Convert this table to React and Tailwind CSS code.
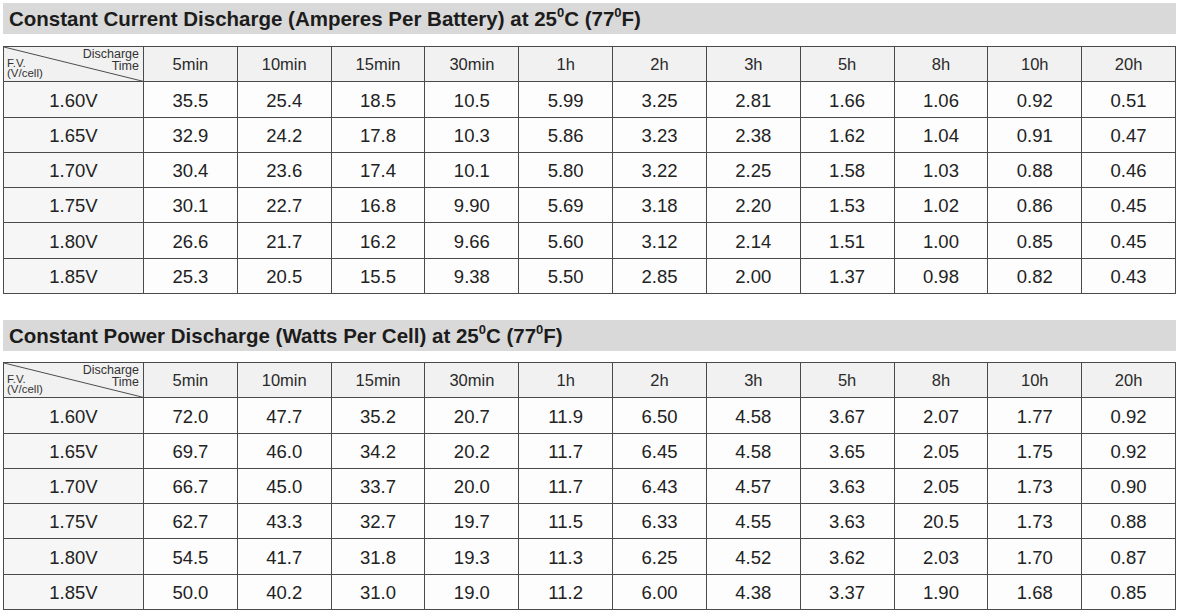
const times = ["5min", "10min", "15min", "30min", "1h", "2h", "3h", "5h", "8h", "10h", "20h"];

const currentRows = [
  ["1.60V", "35.5", "25.4", "18.5", "10.5", "5.99", "3.25", "2.81", "1.66", "1.06", "0.92", "0.51"],
  ["1.65V", "32.9", "24.2", "17.8", "10.3", "5.86", "3.23", "2.38", "1.62", "1.04", "0.91", "0.47"],
  ["1.70V", "30.4", "23.6", "17.4", "10.1", "5.80", "3.22", "2.25", "1.58", "1.03", "0.88", "0.46"],
  ["1.75V", "30.1", "22.7", "16.8", "9.90", "5.69", "3.18", "2.20", "1.53", "1.02", "0.86", "0.45"],
  ["1.80V", "26.6", "21.7", "16.2", "9.66", "5.60", "3.12", "2.14", "1.51", "1.00", "0.85", "0.45"],
  ["1.85V", "25.3", "20.5", "15.5", "9.38", "5.50", "2.85", "2.00", "1.37", "0.98", "0.82", "0.43"],
];

const powerRows = [
  ["1.60V", "72.0", "47.7", "35.2", "20.7", "11.9", "6.50", "4.58", "3.67", "2.07", "1.77", "0.92"],
  ["1.65V", "69.7", "46.0", "34.2", "20.2", "11.7", "6.45", "4.58", "3.65", "2.05", "1.75", "0.92"],
  ["1.70V", "66.7", "45.0", "33.7", "20.0", "11.7", "6.43", "4.57", "3.63", "2.05", "1.73", "0.90"],
  ["1.75V", "62.7", "43.3", "32.7", "19.7", "11.5", "6.33", "4.55", "3.63", "20.5", "1.73", "0.88"],
  ["1.80V", "54.5", "41.7", "31.8", "19.3", "11.3", "6.25", "4.52", "3.62", "2.03", "1.70", "0.87"],
  ["1.85V", "50.0", "40.2", "31.0", "19.0", "11.2", "6.00", "4.38", "3.37", "1.90", "1.68", "0.85"],
];

const Title = ({ children }) => (
  <div className="h-[31px] bg-[#d9d9d9] flex items-center pl-[6px] pt-[1px] text-[20.5px] font-bold text-[#1c1c1c]">
    {children}
  </div>
);

const Deg = () => <span className="text-[13px] relative -top-[6px]">0</span>;

const Table = ({ rows }) => (
  <div className="mt-[12px] h-[248px] grid grid-cols-[140px_repeat(11,1fr)] grid-rows-[repeat(7,1fr)] border-t border-l border-[#4a4a4a]">
    {/* corner cell with diagonal */}
    <div className="relative bg-[#f1f1f1] border-r border-b border-[#4a4a4a] overflow-hidden">
      <svg className="absolute inset-0 w-full h-full" viewBox="0 0 140 35" preserveAspectRatio="none">
        <line x1="0" y1="0" x2="140" y2="35" stroke="#4a4a4a" strokeWidth="1" />
      </svg>
      <div className="absolute right-[4px] top-[1px] text-right text-[12.5px] leading-[12px] text-[#333]">
        Discharge
        <br />
        Time
      </div>
      <div className="absolute left-[3px] bottom-[3px] text-[11.5px] leading-[10px] text-[#333]">
        F.V.
        <br />
        (V/cell)
      </div>
    </div>
    {times.map((t) => (
      <div
        key={t}
        className="bg-[#f1f1f1] border-r border-b border-[#4a4a4a] flex items-center justify-center text-[16.5px] text-[#2a2a2a] pt-[1px]"
      >
        {t}
      </div>
    ))}
    {rows.map((row) =>
      row.map((v, i) => (
        <div
          key={row[0] + i}
          className={
            "border-r border-b border-[#4a4a4a] flex items-center justify-center text-[18.5px] text-[#222] pt-[2px] " +
            (i === 0 ? "bg-[#f6f6f6]" : "bg-[#fdfdfd]")
          }
        >
          {v}
        </div>
      ))
    )}
  </div>
);

export default function App() {
  return (
    <div className="w-[1179px] h-[612px] bg-white pt-[3px] px-[3px] font-['Liberation_Sans',Arial,sans-serif]">
      <Title>
        Constant Current Discharge (Amperes Per Battery) at 25<Deg />C (77<Deg />F)
      </Title>
      <Table rows={currentRows} />
      <div className="h-[26px]" />
      <Title>
        Constant Power Discharge (Watts Per Cell) at 25<Deg />C (77<Deg />F)
      </Title>
      <div className="-mt-[1px]">
        <Table rows={powerRows} />
      </div>
    </div>
  );
}
